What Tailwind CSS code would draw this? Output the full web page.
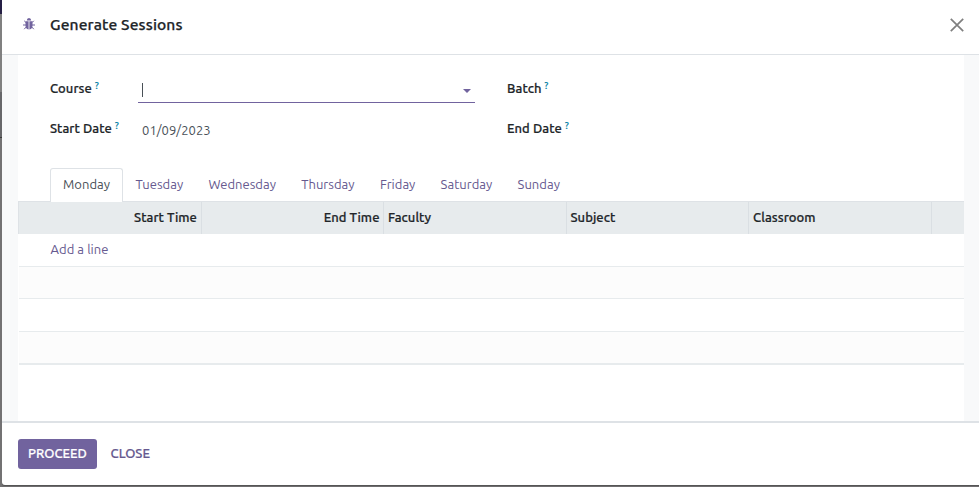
<!DOCTYPE html>
<html lang="en">
<head>
<meta charset="utf-8">
<title>Generate Sessions</title>
<script src="https://cdn.jsdelivr.net/npm/@tailwindcss/browser@4"></script>
</head>
<body class="w-[979px] h-[487px] overflow-hidden bg-[#6f6d6f] font-['Ubuntu','Noto_Sans',sans-serif] text-[13px] leading-5 text-[#212529]">
<div class="flex h-full">
  <div class="w-[2px] shrink-0 flex flex-col">
    <div class="h-[14px] bg-[#251f45]"></div>
    <div class="h-[78px] bg-[#808080]"></div>
    <div class="h-[45px] bg-[#67676a]"></div>
    <div class="h-px bg-[#3a3a3a]"></div>
    <div class="grow bg-[#737273]"></div>
  </div>
  <div class="flex flex-col grow h-[485px] bg-white rounded-bl-[3px] shadow-[0_1px_0_#555]">
    <header class="flex items-center h-[55px] pb-[5px] pl-[21px] pr-[15px] border-b border-[#dee2e6] shrink-0">
      <svg class="w-3 h-3 mr-[15px] mt-[-1px]" viewBox="0 0 12 12" fill="none" stroke="#71639e" stroke-width="1">
        <path d="M3.800 2.600a2.200 2.600 0 0 1 4.400 0z" fill="#71639e" stroke="none"/>
        <path d="M2.500 3.200h3.100v8.300C3.500 11.300 2.500 9.700 2.500 7.500zM6.400 3.200h3.100v4.300c0 2.200-1 3.800-3.100 4z" fill="#71639e" stroke="none"/>
        <path d="M3 4.600 1.200 2.800M3 7H0M3.200 9 1.200 11.200M9 4.600l1.800-1.800M9 7h3M8.800 9l2 2.200"/>
      </svg>
      <h1 class="text-[15.600px] font-medium tracking-[0.12px] [-webkit-text-stroke:0.25px] mt-[-2px] grow">Generate Sessions</h1>
      <svg class="w-[14px] h-[14px]" viewBox="0 0 14 14" stroke="#7f7f7f" stroke-width="1.7"><path d="M.8.8 13.200 13.200M13.200.8.8 13.200"/></svg>
    </header>
    <main class="grow bg-[#f8f9fa] pl-4 pr-[15px] flex">
      <div class="bg-white grow flex flex-col">
        <div class="grid grid-cols-[457px_1fr] pl-8 pt-[23px] h-[113px] grid-rows-[40px_40px] [-webkit-text-stroke:0.2px]">
          <div class="flex">
            <label class="w-[88px] font-medium tracking-[0.06px]">Course<sup class="text-[9px] text-[#0180a5] ml-[3px] top-[-4px]">?</sup></label>
            <div class="w-[337px] h-[25px] border-b border-[#71639e] flex items-center pl-1 pr-1">
              <div class="w-px h-[14px] bg-[#495057]"></div>
              <svg class="ml-auto mt-[2px] w-2 h-1" viewBox="0 0 8 4"><path d="M0 0h8L4 4z" fill="#71639e"/></svg>
            </div>
          </div>
          <label class="font-medium tracking-[0.06px]">Batch<sup class="text-[9px] text-[#0180a5] ml-[3px] top-[-4px]">?</sup></label>
          <div class="flex">
            <label class="w-[92px] font-medium tracking-[0.06px]">Start Date<sup class="text-[9px] text-[#0180a5] ml-[3px] top-[-4px]">?</sup></label>
            <span class="text-[#495057] mt-[2px] tracking-[0.05px] [-webkit-text-stroke:0]">01/09/2023</span>
          </div>
          <label class="font-medium tracking-[0.06px]">End Date<sup class="text-[9px] text-[#0180a5] ml-[3px] top-[-4px]">?</sup></label>
        </div>
        <nav class="flex pl-8 h-[34px] text-[#66598f] relative z-10 -mb-px tracking-[0.02px]">
          <div class="w-[73px] border border-b-0 border-[#dee2e6] rounded-t-[3px] bg-white text-[#495057] pl-3 pt-[5px]">Monday</div>
          <div class="w-[73px] pl-[12.400px] pt-1.5">Tuesday</div>
          <div class="w-[93px] pl-[12.400px] pt-1.5">Wednesday</div>
          <div class="w-[79px] pl-[12.200px] pt-1.5">Thursday</div>
          <div class="w-[60px] pl-3 pt-1.5">Friday</div>
          <div class="w-[77px] pl-[12.600px] pt-1.5">Saturday</div>
          <div class="w-[70px] pl-[12.600px] pt-1.5">Sunday</div>
        </nav>
        <div class="grid grid-cols-[183px_182px_183px_182px_183px_1fr] h-[33px] bg-[#e7ebed] border-t border-l border-[#dee2e6] font-medium leading-[31px] tracking-[0.06px] [-webkit-text-stroke:0.2px] *:border-[#dadfe3]">
          <div class="border-r text-right pr-1">Start Time</div>
          <div class="border-r text-right pr-[3.500px]">End Time</div>
          <div class="border-r pl-1">Faculty</div>
          <div class="border-r pl-[3.500px]">Subject</div>
          <div class="border-r pl-1">Classroom</div>
          <div></div>
        </div>
        <div class="ml-px">
          <div class="h-[33px] border-b border-[#e7ebed] pl-[31.500px] pt-[5px] text-[#66598f] tracking-[0.06px]">Add a line</div>
          <div class="h-8 border-b border-[#e7ebed] bg-[#fcfcfc]"></div>
          <div class="h-[33px] border-b border-[#e7ebed]"></div>
          <div class="h-[33px] border-b-2 border-[#e7ebed] bg-[#fcfcfc]"></div>
        </div>
      </div>
    </main>
    <footer class="h-16 shrink-0 border-t-2 border-[#dee2e6] pl-4 pt-4 flex font-medium [-webkit-text-stroke:0.2px]">
      <button class="w-[79px] h-[30px] pb-[2px] rounded-[3px] bg-[#71639e] text-white tracking-[0.03px]">PROCEED</button>
      <button class="h-[30px] pb-[2px] ml-[13.600px] text-[#66598f]">CLOSE</button>
    </footer>
  </div>
</div>
</body>
</html>
